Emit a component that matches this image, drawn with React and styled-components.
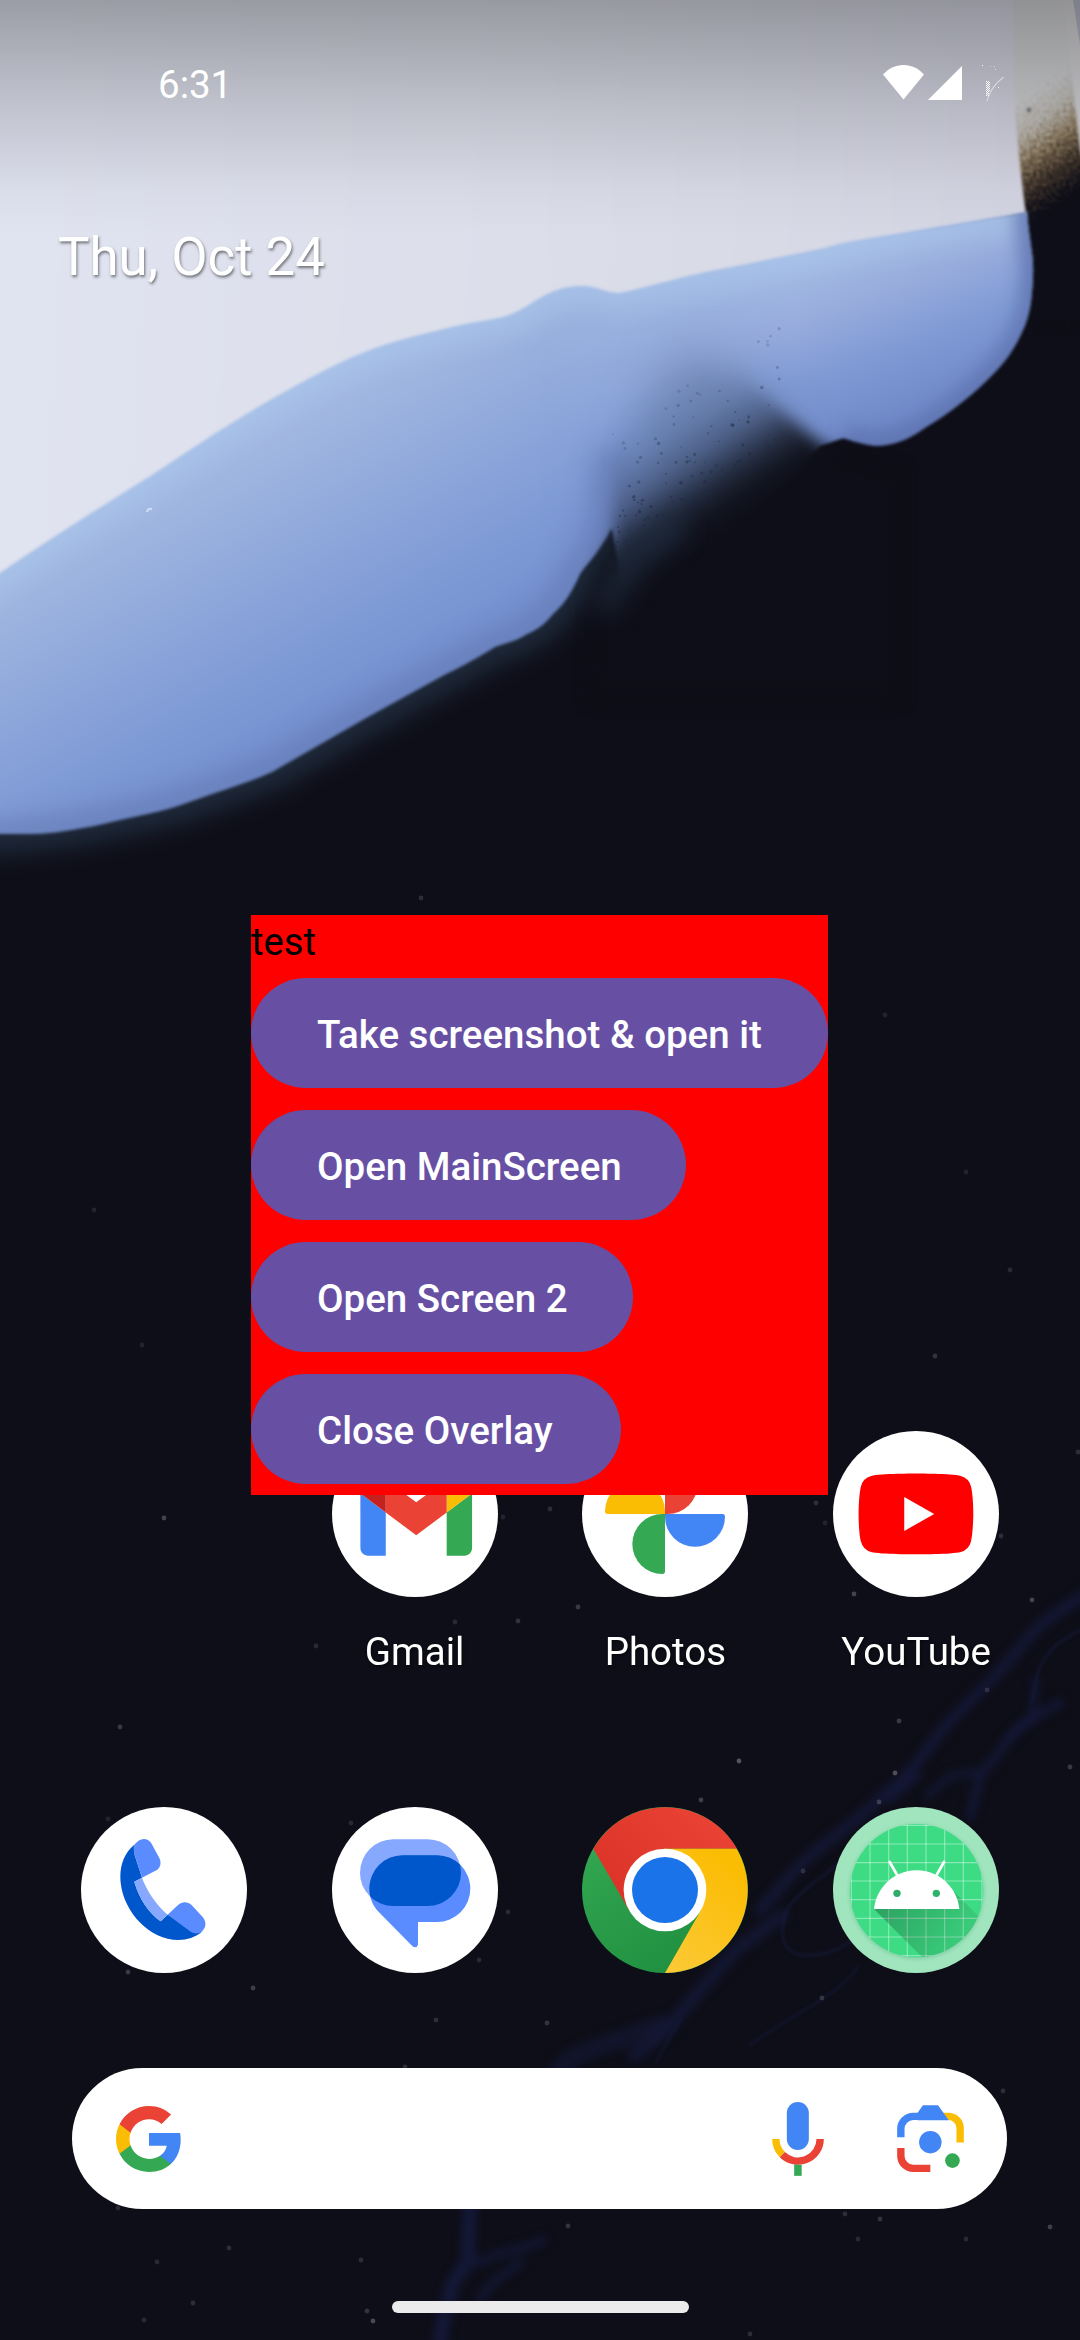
import React from "react";
import styled, { createGlobalStyle } from "styled-components";

const GlobalStyle = createGlobalStyle`
  html, body { margin: 0; padding: 0; background: #0e0e18; }
  body { font-family: Roboto, "Noto Sans", sans-serif; }
`;

const Screen = styled.main`
  position: relative;
  isolation: isolate;
  width: 1080px;
  height: 2340px;
  overflow: hidden;
  display: flex;
  flex-direction: column;
  color: #fff;
`;

const WallpaperArt = styled.svg`
  position: absolute;
  inset: 0;
  z-index: -1;
  display: block;
`;

const StatusBar = styled.header`
  display: flex;
  justify-content: space-between;
  align-items: flex-start;
  height: 164px;
  box-sizing: border-box;
  padding: 62px 76px 0 158px;
  flex: none;
`;

const Clock = styled.time`
  font-size: 38.5px;
  line-height: 45px;
`;

const StatusIcons = styled.div`
  display: flex;
  align-items: flex-start;
  gap: 4px;
  padding-top: 3px;
`;

const BatterySlot = styled.div`
  display: flex;
  padding-left: 16px;
`;

const DateLabel = styled.div`
  margin: 62px 0 0 58px;
  height: 62px;
  font-size: 52.8px;
  line-height: 62px;
  text-shadow: 1px 2px 3px rgba(0, 0, 0, 0.5);
  flex: none;
`;

const IconGrid = styled.nav`
  display: grid;
  grid-template-columns: repeat(4, 1fr);
  justify-items: center;
  padding: 0 38.5px;
  margin-top: ${(p) => p.$top}px;
  height: ${(p) => p.$height}px;
  flex: none;
`;

const AppShortcut = styled.div`
  display: flex;
  flex-direction: column;
  align-items: center;
  gap: 32px;
  grid-column-start: ${(p) => p.$column};
`;

const AppIcon = styled.svg`
  display: block;
  width: 166px;
  height: 166px;
`;

const AppLabel = styled.span`
  font-size: 38.5px;
  line-height: 45px;
  text-shadow: 1px 1px 3px rgba(0, 0, 0, 0.6);
`;

const SearchBar = styled.div`
  display: flex;
  align-items: center;
  width: 935px;
  height: 141px;
  box-sizing: border-box;
  margin: 95px 0 0 72px;
  padding: 0 43px 0 41px;
  border-radius: 71px;
  background: #fff;
  flex: none;
`;

const SearchSpacer = styled.div`
  flex: 1;
`;

const SearchActions = styled.div`
  display: flex;
  align-items: center;
  gap: 73px;
`;

const HomeHandle = styled.div`
  width: 297px;
  height: 12px;
  margin: 92px auto 0;
  border-radius: 6px;
  background: #ebebeb;
  flex: none;
`;

const Overlay = styled.section`
  position: absolute;
  left: 251px;
  top: 915px;
  display: flex;
  flex-direction: column;
  align-items: flex-start;
  gap: 22px;
  width: 577px;
  height: 580px;
  background: #ff0000;
`;

const OverlayText = styled.p`
  margin: 0 0 -11px;
  height: 52px;
  font-size: 38.2px;
  line-height: 55px;
  color: #000;
`;

const OverlayButton = styled.button`
  width: ${(p) => p.$width}px;
  height: 110px;
  padding: 2px 0 0 66px;
  border: 0;
  border-radius: 55px;
  background: #6750a4;
  color: #fff;
  font: 500 38.5px/55px Roboto, "Noto Sans", sans-serif;
  text-align: left;
  white-space: nowrap;
`;

const DOTS = [
  [421, 898, 0.3], [935, 1356, 0.35], [816, 1503, 0.3], [825, 1523, 0.2], [854, 1594, 0.5],
  [1001, 1536, 0.3], [1032, 1600, 0.5], [1078, 1452, 0.3], [164, 1518, 0.5], [550, 1509, 0.3],
  [503, 1517, 0.2], [578, 1607, 0.4], [518, 1621, 0.35], [455, 1622, 0.25], [316, 1646, 0.25],
  [120, 1727, 0.4], [739, 1761, 0.65], [895, 1773, 0.6], [899, 1721, 0.4], [987, 1690, 0.3],
  [1070, 1767, 0.4], [701, 1800, 0.45], [879, 1802, 0.4], [108, 1819, 0.2], [351, 1823, 0.25],
  [128, 1972, 0.4], [253, 1988, 0.45], [508, 1912, 0.25], [479, 1960, 0.25], [547, 2023, 0.35],
  [436, 2020, 0.3], [822, 1998, 0.35], [803, 1871, 0.3], [1003, 2091, 0.3], [405, 2067, 0.3],
  [118, 2208, 0.25], [229, 2248, 0.3], [157, 2262, 0.25], [193, 2303, 0.3], [361, 2260, 0.3],
  [367, 2311, 0.35], [373, 2321, 0.55], [144, 2320, 0.25], [845, 2214, 0.3], [880, 2219, 0.35],
  [1050, 2227, 0.45], [858, 2239, 0.25], [966, 2239, 0.25], [750, 2334, 0.3], [568, 2226, 0.35],
  [94, 1210, 0.2], [966, 1172, 0.2], [885, 1015, 0.2], [142, 1345, 0.2], [1010, 1270, 0.25],
];

const hash = (n) => {
  const v = Math.sin(n * 12.9898) * 43758.5453;
  return v - Math.floor(v);
};

// Soot specks scattered around the line that runs from (612, 540) to (800, 420).
const SPECKS = Array.from({ length: 120 }, (_, i) => {
  const t = hash(i + 1);
  const w = hash(i + 201) ** 2;
  return {
    x: 610 + t * 170,
    y: 540 - t * 105 - w * 130 + hash(i + 401) * 30,
    r: 0.7 + hash(i + 601) * 1.1,
    o: 0.15 + (1 - w) * 0.4,
  };
});

const BLUE_SHAPE =
  "M-10 580 L0 573 C70 525 135 487 190 450 C275 393 340 363 344 361 C385 342 420 335 448 328 C475 321 495 320 506 316 C530 309 545 287 580 286 C598 286 604 293 620 293 C650 287 690 274 733 267 L826 248 C850 240 870 239 884 236 C930 228 980 220 1027 212 C1029 240 1034 255 1033 275 C1032 300 1030 316 1022 332 C1015 348 1005 362 994 373 C975 393 950 413 926 427 C915 435 905 440 898 442 C885 446 878 446 870 445 C855 442 850 440 843 438 L820 446 L770 500 L700 560 L625 600 L612 528 C597 555 590 560 580 574 C570 596 563 605 553 614 C545 624 537 630 527 634 C515 642 505 643 495 647 C480 656 465 665 446 674 L366 718 L272 772 C250 782 220 791 192 801 C165 812 130 817 103 824 C75 830 50 834 31 834 L-10 834 Z";

const TOP_EDGE =
  "M-40 600 L0 573 C70 525 135 487 190 450 C275 393 340 363 344 361 C385 342 420 335 448 328 L506 316 C530 309 545 287 580 286 L620 293 L733 267 L826 248 L884 236 L1040 210";

const LEFT_RIM =
  "M-60 840 L31 834 C60 832 150 815 192 801 L272 772 L366 718 L446 674 L495 647 L527 634 L553 614 L580 574 L604 537 L612 450";
const RIGHT_RIM =
  "M1027 205 C1029 240 1034 255 1033 275 C1032 300 1030 316 1022 332 C1010 360 970 400 926 427 C898 445 875 448 843 438";

function Blur({ id, amount }) {
  return (
    <filter
      id={id}
      filterUnits="userSpaceOnUse"
      x="-100"
      y="-100"
      width="1280"
      height="2540"
      colorInterpolationFilters="sRGB"
    >
      <feGaussianBlur stdDeviation={amount} />
    </filter>
  );
}

function Wallpaper() {
  return (
    <WallpaperArt width="1080" height="2340" viewBox="0 0 1080 2340" aria-hidden="true">
      <defs>
        <linearGradient id="scrim" x1="0" y1="0" x2="0" y2="1">
          <stop offset="0" stopColor="#000" stopOpacity="0.31" />
          <stop offset="0.45" stopColor="#000" stopOpacity="0.14" />
          <stop offset="0.8" stopColor="#000" stopOpacity="0.03" />
          <stop offset="1" stopColor="#000" stopOpacity="0" />
        </linearGradient>
        <linearGradient id="paper" gradientUnits="userSpaceOnUse" x1="0" y1="200" x2="1000" y2="260">
          <stop offset="0" stopColor="#e0e3f0" />
          <stop offset="0.5" stopColor="#dcdfea" />
          <stop offset="1" stopColor="#d4d5e2" />
        </linearGradient>
        <linearGradient id="burn" gradientUnits="userSpaceOnUse" x1="1010" y1="108" x2="1066" y2="194">
          <stop offset="0" stopColor="#d2d3d6" />
          <stop offset="0.28" stopColor="#bdb8b0" />
          <stop offset="0.5" stopColor="#8b795e" />
          <stop offset="0.74" stopColor="#41352b" />
          <stop offset="1" stopColor="#0e0e18" />
        </linearGradient>
        <linearGradient id="blue" gradientUnits="userSpaceOnUse" x1="180" y1="440" x2="350" y2="740">
          <stop offset="0" stopColor="#a9bee5" />
          <stop offset="0.35" stopColor="#94acdc" />
          <stop offset="0.7" stopColor="#7f9bd6" />
          <stop offset="1" stopColor="#708ccc" />
        </linearGradient>
        <linearGradient id="blueRight" gradientUnits="userSpaceOnUse" x1="820" y1="250" x2="890" y2="440">
          <stop offset="0" stopColor="#a5bce5" />
          <stop offset="0.3" stopColor="#98acdc" />
          <stop offset="0.6" stopColor="#7e99d4" />
          <stop offset="1" stopColor="#6c85c5" />
        </linearGradient>
        <linearGradient id="soot" gradientUnits="userSpaceOnUse" x1="650" y1="392" x2="735" y2="520">
          <stop offset="0" stopColor="#1a2438" stopOpacity="0" />
          <stop offset="0.3" stopColor="#1a2438" stopOpacity="0.1" />
          <stop offset="0.52" stopColor="#151c2b" stopOpacity="0.36" />
          <stop offset="0.74" stopColor="#11151f" stopOpacity="0.82" />
          <stop offset="0.88" stopColor="#0f111a" stopOpacity="0.97" />
          <stop offset="1" stopColor="#0e0e18" />
        </linearGradient>
        <linearGradient id="fadeIn" x1="0" y1="0" x2="1" y2="0">
          <stop offset="0" stopColor="#000" />
          <stop offset="1" stopColor="#fff" />
        </linearGradient>
        <mask id="rightMask" maskUnits="userSpaceOnUse" x="0" y="0" width="1080" height="900">
          <rect x="540" y="0" width="260" height="900" fill="url(#fadeIn)" />
          <rect x="800" y="0" width="280" height="900" fill="#fff" />
        </mask>
        <clipPath id="blueClip"><path d={BLUE_SHAPE} /></clipPath>
        <Blur id="soft1" amount={1.6} />
        <Blur id="soft4" amount={4} />
        <Blur id="soft8" amount={8} />
        <Blur id="soft12" amount={12} />
        <Blur id="soft24" amount={24} />
        <filter id="grain" filterUnits="userSpaceOnUse" x="940" y="-80" width="240" height="420" colorInterpolationFilters="sRGB">
          <feTurbulence type="fractalNoise" baseFrequency="0.3" numOctaves="2" seed="4" result="n" />
          <feDisplacementMap in="SourceGraphic" in2="n" scale="44" xChannelSelector="R" yChannelSelector="G" />
          <feGaussianBlur stdDeviation="1" />
        </filter>
      </defs>

      <rect width="1080" height="2340" fill="#0e0e18" />

      <path d="M950 -70 H1170 V330 H950 Z" fill="url(#burn)" filter="url(#grain)" />
      <path d="M1062 -10 H1090 V190 L1080 150 Z" fill="#d5d4d8" filter="url(#soft1)" />
      <path d="M1073 0 H1080 V45 Z" fill="#b5b8c8" />
      <path
        d="M-10 -10 H1013 L1014 100 C1018 150 1023 190 1026 214 L884 240 L733 272 L620 300 L506 322 L344 370 L190 460 L-10 590 Z"
        fill="url(#paper)"
        filter="url(#soft1)"
      />
      <circle cx="1029" cy="110" r="2.2" fill="#62646a" filter="url(#soft1)" />

      <path d={LEFT_RIM} fill="none" stroke="#26374b" strokeWidth="34" opacity="0.7" filter="url(#soft12)" />

      <g filter="url(#soft1)">
        <path d={BLUE_SHAPE} fill="url(#blue)" />
        <path d={BLUE_SHAPE} fill="url(#blueRight)" mask="url(#rightMask)" />
        <g clipPath="url(#blueClip)">
          <path d={TOP_EDGE} fill="none" stroke="#a9c5ea" strokeWidth="34" opacity="0.65" filter="url(#soft12)" />
          <path d={LEFT_RIM} fill="none" stroke="#657ab4" strokeWidth="34" opacity="0.65" filter="url(#soft12)" />
          <path d={RIGHT_RIM} fill="none" stroke="#5f74b0" strokeWidth="26" opacity="0.8" filter="url(#soft8)" />
        </g>
      </g>

      <path d="M630 540 C622 460 640 390 675 355 C720 340 755 375 790 425 L760 480 L660 540 Z" fill="#566c92" opacity="0.4" filter="url(#soft24)" />
      <path
        d="M614 410 L613 532 L594 590 L590 700 L900 700 L900 470 C870 466 850 456 832 449 C808 438 780 405 740 375 L640 360 Z"
        fill="url(#soot)"
        filter="url(#soft8)"
      />
      <path d="M600 610 L634 560 L680 522" fill="none" stroke="#223044" strokeWidth="26" opacity="0.6" filter="url(#soft12)" />
      {SPECKS.map((s, i) => (
        <circle key={i} cx={s.x} cy={s.y} r={s.r} fill="#1d2a42" opacity={s.o} />
      ))}
      <path d="M147 512 q1 -4 5 -3" fill="none" stroke="#dfe8f7" strokeWidth="2" opacity="0.8" />

      <g fill="none" stroke="#161c42" strokeLinecap="round" strokeLinejoin="round" filter="url(#soft4)">
        <path d="M1090 1590 C1070 1606 1050 1616 1037 1628 C1020 1646 1008 1664 994 1677 C975 1698 955 1714 938 1735 C920 1760 905 1780 886 1793 C858 1822 826 1840 799 1866 L760 1910" strokeWidth="11" opacity="0.65" />
        <path d="M782 1915 C762 1932 750 1940 738 1948 C716 1972 700 1990 678 2016 C664 2034 650 2045 634 2055" strokeWidth="13" opacity="0.6" />
        <path d="M1060 1703 C1040 1715 1022 1722 1007 1740 C998 1758 990 1762 981 1774 C976 1790 974 1802 970 1816" strokeWidth="9" opacity="0.65" />
        <path d="M1036 1680 L1032 1716 L1010 1738 M975 1772 L950 1776 L928 1796 M918 1776 L890 1800" strokeWidth="7" opacity="0.65" />
        <path d="M660 2024 C630 2040 600 2042 573 2058 L560 2068" strokeWidth="18" opacity="0.45" />
        <path d="M469 2200 C472 2220 466 2240 469 2258 C462 2275 450 2280 450 2295 C446 2315 440 2325 440 2350" strokeWidth="14" opacity="0.75" />
        <path d="M478 2263 C500 2250 520 2252 543 2240 M480 2300 C490 2280 505 2276 520 2262" strokeWidth="8" opacity="0.65" />
      </g>
      <g fill="none" stroke="#1a2150" strokeLinecap="round" filter="url(#soft1)">
        <path d="M1080 1630 C1062 1640 1046 1650 1038 1672 L1032 1702 M860 1840 C840 1870 800 1886 786 1912 C778 1936 784 1952 800 1955 C830 1957 845 1946 858 1936" strokeWidth="3" opacity="0.38" />
        <path d="M858 1966 C840 1996 790 2015 750 2045 M680 2020 L656 2062" strokeWidth="3" opacity="0.32" />
      </g>
      {DOTS.map(([x, y, o]) => (
        <circle key={`${x}-${y}`} cx={x} cy={y} r="2.4" fill="#9a9ea8" opacity={o * 0.75} />
      ))}
      <rect width="1080" height="235" fill="url(#scrim)" />
    </WallpaperArt>
  );
}

function WifiIcon() {
  return (
    <svg width="41" height="35" viewBox="0 0 41 35" fill="#fff">
      <path d="M0 9.6 C5.5 3.4 12.5 0 20.5 0 C28.5 0 35.5 3.4 41 9.6 L20.5 34.5 Z" />
    </svg>
  );
}

function SignalIcon() {
  return (
    <svg width="34" height="35" viewBox="0 0 34 35" fill="#fff">
      <path d="M34 1 V35 H0 Z" />
    </svg>
  );
}

function BatteryIcon() {
  const grid = [];
  for (let r = 0; r < 15; r += 1) {
    for (let c = 0; c < 4; c += 1) {
      if ((r + c) % 2 === 0 && !(r > 9 && c > 2)) grid.push([c, r]);
    }
  }
  return (
    <svg width="22" height="37" viewBox="0 0 22 37" fill="#fff">
      <rect x="0" y="0" width="1" height="1" />
      <rect x="8" y="1" width="1" height="1" opacity=".4" />
      <rect x="12" y="1" width="1" height="1" opacity=".5" />
      <rect x="13" y="4" width="1" height="1" opacity=".5" />
      <rect x="16" y="22" width="1" height="1" />
      {grid.map(([c, r]) => (
        <rect key={`${c}-${r}`} x={4 + c} y={16 + r} width="1" height="1" />
      ))}
      <path d="M21.5 12 C14 18 7.5 26 5 36" fill="none" stroke="#fff" strokeWidth="1.1" opacity=".5" />
    </svg>
  );
}

function GmailIcon() {
  return (
    <AppIcon viewBox="0 0 166 166">
      <circle cx="83" cy="83" r="83" fill="#fff" />
      <g transform="translate(-37.6 -12.4) scale(1.269)">
        <path fill="#4285f4" d="M58 108h14V74L52 59v43c0 3.32 2.69 6 6 6" />
        <path fill="#34a853" d="M120 108h14c3.32 0 6-2.69 6-6V59l-20 15" />
        <path fill="#fbbc04" d="M120 48v26l20-15v-8c0-7.42-8.47-11.65-14.4-7.2" />
        <path fill="#ea4335" d="M72 74V48l24 18 24-18v26L96 92" />
        <path fill="#c5221f" d="M52 51v8l20 15V48l-5.6-4.2c-5.94-4.45-14.4-.22-14.4 7.2" />
      </g>
    </AppIcon>
  );
}

function PhotosIcon() {
  const petal = "M0 0 H172 Q180 0 180 8 A90 90 0 0 1 0 8 Z";
  const colors = ["#4285f4", "#34a853", "#fbbc04", "#ea4335"];
  return (
    <AppIcon viewBox="0 0 498 498">
      <circle cx="249" cy="249" r="249" fill="#fff" />
      <g transform="translate(249 249)">
        {colors.map((c, i) => (
          <path key={c} d={petal} fill={c} transform={`rotate(${i * 90})`} />
        ))}
      </g>
    </AppIcon>
  );
}

function YouTubeIcon() {
  return (
    <AppIcon viewBox="0 0 166 166">
      <circle cx="83" cy="83" r="83" fill="#fff" />
      <g transform="translate(25.6 25.6) scale(4.78)">
        <path
          fill="#f00"
          d="M23.498 6.186a3.016 3.016 0 0 0-2.122-2.136C19.505 3.545 12 3.545 12 3.545s-7.505 0-9.377.505A3.017 3.017 0 0 0 .502 6.186C0 8.07 0 12 0 12s0 3.93.502 5.814a3.016 3.016 0 0 0 2.122 2.136c1.871.505 9.376.505 9.376.505s7.505 0 9.377-.505a3.015 3.015 0 0 0 2.122-2.136C24 15.93 24 12 24 12s0-3.93-.502-5.814z"
        />
        <path fill="#fff" d="M9.545 15.568V8.432L15.818 12z" />
      </g>
    </AppIcon>
  );
}

function PhoneIcon() {
  return (
    <AppIcon viewBox="63 81 498 498">
      <circle cx="312" cy="330" r="249" fill="#fff" />
      <path fill="#0057cc" d="M222 195 C195 218 181 251 181 290 C181 385 263 480 355 480 C382 480 406 472 424 457 L390 440 L323 404 L302 424 C265 398 237 355 223 305 L246 293 L224 225 Z" />
      <path fill="#5a8cff" d="M222 195 C232 183 242 177 251 177 C261 177 270 182 275 191 L299 236 C305 250 300 264 289 271 L246 293 L224 225 C221 213 220 203 222 195 Z" />
      <path fill="#5a8cff" d="M323 404 L355 374 C366 364 383 364 394 374 L428 411 C439 424 439 440 428 452 C420 462 403 463 390 454 Z" />
      <path fill="#87a8ff" d="M246 293 C262 337 290 375 323 404 L302 424 C265 398 237 355 223 305 Z" />
    </AppIcon>
  );
}

function MessagesIcon() {
  return (
    <AppIcon viewBox="816 81 498 498">
      <defs>
        <clipPath id="bubbleBack"><rect x="900" y="178" width="303" height="200" rx="100" /></clipPath>
      </defs>
      <circle cx="1065" cy="330" r="249" fill="#fff" />
      <rect x="900" y="178" width="303" height="200" rx="100" fill="#87a8ff" />
      <path fill="#5a8cff" d="M1028 226 H1131 A100 100 0 0 1 1131 426 H1074 V494 Q1072 502 1064 502 Q1060 501 1056 497 L957 397 C940 379 928 356 928 326 A100 100 0 0 1 1028 226 Z" />
      <rect x="928" y="226" width="303" height="200" rx="100" fill="#0057cc" clipPath="url(#bubbleBack)" />
    </AppIcon>
  );
}

function ChromeIcon() {
  return (
    <AppIcon viewBox="69 81 498 498">
      <defs>
        <linearGradient id="chromeRed" x1="0" y1="1" x2="1" y2="0.3">
          <stop offset="0" stopColor="#d93025" />
          <stop offset="1" stopColor="#ea4335" />
        </linearGradient>
        <linearGradient id="chromeGreen" x1="0.7" y1="1" x2="0.1" y2="0.1">
          <stop offset="0" stopColor="#1e8e3e" />
          <stop offset="1" stopColor="#34a853" />
        </linearGradient>
        <linearGradient id="chromeYellow" x1="0.2" y1="1" x2="0.7" y2="0.1">
          <stop offset="0" stopColor="#fcc934" />
          <stop offset="1" stopColor="#fbbc04" />
        </linearGradient>
      </defs>
      <circle cx="318" cy="330" r="249" fill="url(#chromeGreen)" />
      <path fill="url(#chromeRed)" d="M103 206 A249 249 0 0 1 534 206 H318 L318 330 L211 392 Z" />
      <path fill="url(#chromeYellow)" d="M533 206 A249 249 0 0 1 318 579 L425 392 L318 330 V206 Z" />
      <circle cx="318" cy="330" r="124" fill="#fff" />
      <circle cx="318" cy="330" r="99" fill="#1a73e8" />
    </AppIcon>
  );
}

function AndroidIcon() {
  const columns = [875, 931, 987, 1043, 1099, 1155, 1211, 1267];
  const rows = [134, 190, 246, 301, 357, 413, 469, 525];
  return (
    <AppIcon viewBox="820 79 498 498">
      <defs>
        <clipPath id="robotDisc"><circle cx="1071" cy="330" r="200" /></clipPath>
        <linearGradient id="robotShade" gradientUnits="userSpaceOnUse" x1="980" y1="370" x2="1180" y2="500">
          <stop offset="0" stopColor="#000" stopOpacity="0.25" />
          <stop offset="1" stopColor="#000" stopOpacity="0.08" />
        </linearGradient>
        <filter id="discShadow" x="-10%" y="-10%" width="120%" height="120%"><feGaussianBlur stdDeviation="6" /></filter>
      </defs>
      <circle cx="1069" cy="328" r="249" fill="#a0e5be" />
      <circle cx="1071" cy="333" r="201" fill="#4fae7c" opacity="0.45" filter="url(#discShadow)" />
      <circle cx="1071" cy="330" r="200" fill="#3ddc84" />
      <g clipPath="url(#robotDisc)">
        <g stroke="#fff" strokeOpacity="0.4" strokeWidth="3.5">
          {columns.map((x) => <line key={x} x1={x} y1="120" x2={x} y2="540" />)}
          {rows.map((y) => <line key={y} x1="860" y1={y} x2="1280" y2={y} />)}
        </g>
        <path fill="url(#robotShade)" d="M943 385 L1130 572 L1310 460 L1185 335 Z" />
      </g>
      <g stroke="#fff" strokeWidth="8" strokeLinecap="round">
        <path d="M990 244 L1014 286" />
        <path d="M1153 244 L1129 286" />
      </g>
      <path fill="#fff" d="M943 385 C950 318 1005 269 1071 269 C1137 269 1192 318 1199 385 Z" />
      <circle cx="1012" cy="338" r="11" fill="#2fac68" />
      <circle cx="1130" cy="338" r="11" fill="#2fb36c" />
    </AppIcon>
  );
}

function GoogleIcon() {
  return (
    <svg width="72" height="72" viewBox="0 0 24 24">
      <path fill="#4285f4" d="M22.56 12.25c0-.78-.07-1.53-.2-2.25H12v4.26h5.92c-.26 1.37-1.04 2.53-2.21 3.31v2.77h3.57c2.08-1.92 3.28-4.74 3.28-8.09z" />
      <path fill="#34a853" d="M12 23c2.97 0 5.46-.98 7.28-2.66l-3.57-2.77c-.98.66-2.23 1.06-3.71 1.06-2.86 0-5.29-1.93-6.16-4.53H2.18v2.84C3.99 20.53 7.7 23 12 23z" />
      <path fill="#fbbc05" d="M5.84 14.09c-.22-.66-.35-1.36-.35-2.09s.13-1.43.35-2.09V7.07H2.18C1.43 8.55 1 10.22 1 12s.43 3.45 1.18 4.93l2.85-2.22.81-.62z" />
      <path fill="#ea4335" d="M12 5.38c1.62 0 3.06.56 4.21 1.64l3.15-3.15C17.45 2.09 14.97 1 12 1 7.7 1 3.99 3.47 2.18 7.07l3.66 2.84c.87-2.6 3.3-4.53 6.16-4.53z" />
    </svg>
  );
}

function MicIcon() {
  return (
    <svg width="52" height="74" viewBox="216.5 186 156 222" fill="none">
      <rect x="261" y="186" width="66" height="144" rx="33" fill="#4285f4" />
      <path d="M228 297 A66.5 66.5 0 0 0 247.5 344" stroke="#fbbc04" strokeWidth="22" />
      <path d="M247.5 344 A66.5 66.5 0 0 0 361 297" stroke="#ea4335" strokeWidth="22" />
      <rect x="283" y="374" width="22.5" height="33.5" fill="#34a853" />
    </svg>
  );
}

function LensIcon() {
  return (
    <svg width="67" height="67" viewBox="590.5 195 200 200" fill="none">
      <path d="M602 291 V266 A37 37 0 0 1 639 229 H700" stroke="#4285f4" strokeWidth="22" />
      <path d="M720 229 H744 A35 35 0 0 1 779 264 V307" stroke="#fbbc04" strokeWidth="22" />
      <path d="M652 218 L668 196 H713 L745 240.5 H652 Z" fill="#4285f4" />
      <path d="M602 323 V347 A37 37 0 0 0 639 384 H690" stroke="#ea4335" strokeWidth="22" />
      <circle cx="690" cy="306" r="33.5" fill="#4285f4" />
      <circle cx="756" cy="361" r="22" fill="#34a853" />
    </svg>
  );
}

const homeApps = [
  { name: "Gmail", column: 2, Icon: GmailIcon },
  { name: "Photos", column: 3, Icon: PhotosIcon },
  { name: "YouTube", column: 4, Icon: YouTubeIcon },
];

const dockApps = [PhoneIcon, MessagesIcon, ChromeIcon, AndroidIcon];

const overlayActions = [
  { label: "Take screenshot & open it", width: 577 },
  { label: "Open MainScreen", width: 435 },
  { label: "Open Screen 2", width: 382 },
  { label: "Close Overlay", width: 370 },
];

export default function App() {
  return (
    <>
      <GlobalStyle />
      <Screen>
        <Wallpaper />
        <StatusBar>
          <Clock>6:31</Clock>
          <StatusIcons>
            <WifiIcon />
            <SignalIcon />
            <BatterySlot>
              <BatteryIcon />
            </BatterySlot>
          </StatusIcons>
        </StatusBar>
        <DateLabel>Thu, Oct 24</DateLabel>
        <IconGrid $top={1143} $height={244}>
          {homeApps.map(({ name, column, Icon }) => (
            <AppShortcut key={name} $column={column}>
              <Icon />
              <AppLabel>{name}</AppLabel>
            </AppShortcut>
          ))}
        </IconGrid>
        <IconGrid $top={132} $height={166}>
          {dockApps.map((Icon, i) => (
            <AppShortcut key={i} $column={i + 1}>
              <Icon />
            </AppShortcut>
          ))}
        </IconGrid>
        <SearchBar>
          <GoogleIcon />
          <SearchSpacer />
          <SearchActions>
            <MicIcon />
            <LensIcon />
          </SearchActions>
        </SearchBar>
        <HomeHandle />
        <Overlay>
          <OverlayText>test</OverlayText>
          {overlayActions.map(({ label, width }) => (
            <OverlayButton key={label} $width={width}>{label}</OverlayButton>
          ))}
        </Overlay>
      </Screen>
    </>
  );
}
